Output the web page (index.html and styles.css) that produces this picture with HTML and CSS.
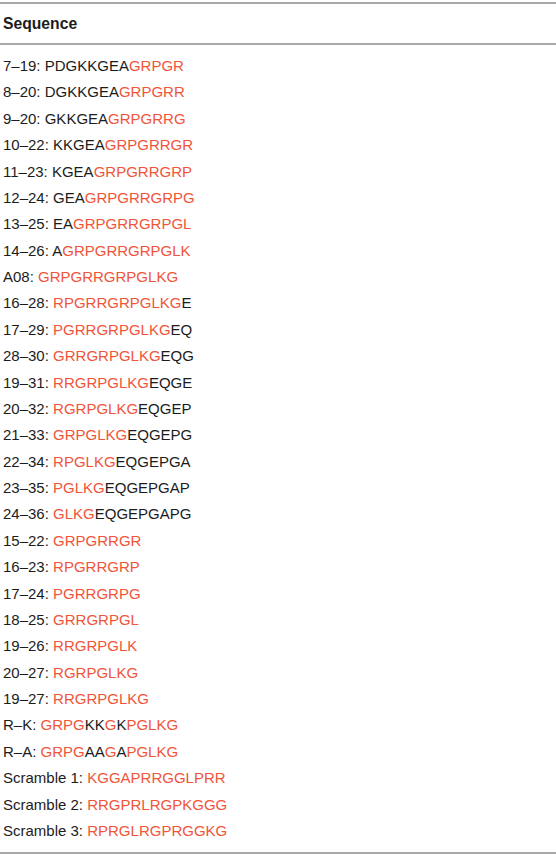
FILE: index.html
```html
<!DOCTYPE html>
<html>
<head>
<meta charset="utf-8">
<link rel="stylesheet" href="styles.css">
</head>
<body>
<table class="seq-table">
  <thead>
    <tr><th>Sequence</th></tr>
  </thead>
  <tbody>
    <tr><td>7–19: PDGKKGEA<span class="hl">GRPGR</span></td></tr>
    <tr><td>8–20: DGKKGEA<span class="hl">GRPGRR</span></td></tr>
    <tr><td>9–20: GKKGEA<span class="hl">GRPGRRG</span></td></tr>
    <tr><td>10–22: KKGEA<span class="hl">GRPGRRGR</span></td></tr>
    <tr><td>11–23: KGEA<span class="hl">GRPGRRGRP</span></td></tr>
    <tr><td>12–24: GEA<span class="hl">GRPGRRGRPG</span></td></tr>
    <tr><td>13–25: EA<span class="hl">GRPGRRGRPGL</span></td></tr>
    <tr><td>14–26: A<span class="hl">GRPGRRGRPGLK</span></td></tr>
    <tr><td>A08: <span class="hl">GRPGRRGRPGLKG</span></td></tr>
    <tr><td>16–28: <span class="hl">RPGRRGRPGLKG</span>E</td></tr>
    <tr><td>17–29: <span class="hl">PGRRGRPGLKG</span>EQ</td></tr>
    <tr><td>28–30: <span class="hl">GRRGRPGLKG</span>EQG</td></tr>
    <tr><td>19–31: <span class="hl">RRGRPGLKG</span>EQGE</td></tr>
    <tr><td>20–32: <span class="hl">RGRPGLKG</span>EQGEP</td></tr>
    <tr><td>21–33: <span class="hl">GRPGLKG</span>EQGEPG</td></tr>
    <tr><td>22–34: <span class="hl">RPGLKG</span>EQGEPGA</td></tr>
    <tr><td>23–35: <span class="hl">PGLKG</span>EQGEPGAP</td></tr>
    <tr><td>24–36: <span class="hl">GLKG</span>EQGEPGAPG</td></tr>
    <tr><td>15–22: <span class="hl">GRPGRRGR</span></td></tr>
    <tr><td>16–23: <span class="hl">RPGRRGRP</span></td></tr>
    <tr><td>17–24: <span class="hl">PGRRGRPG</span></td></tr>
    <tr><td>18–25: <span class="hl">GRRGRPGL</span></td></tr>
    <tr><td>19–26: <span class="hl">RRGRPGLK</span></td></tr>
    <tr><td>20–27: <span class="hl">RGRPGLKG</span></td></tr>
    <tr><td>19–27: <span class="hl">RRGRPGLKG</span></td></tr>
    <tr><td>R–K: <span class="hl">GRPG</span>KK<span class="hl">G</span>K<span class="hl">PGLKG</span></td></tr>
    <tr><td>R–A: <span class="hl">GRPG</span>AA<span class="hl">G</span>A<span class="hl">PGLKG</span></td></tr>
    <tr><td>Scramble 1: <span class="hl">KGGAPRRGGLPRR</span></td></tr>
    <tr><td>Scramble 2: <span class="hl">RRGPRLRGPKGGG</span></td></tr>
    <tr><td>Scramble 3: <span class="hl">RPRGLRGPRGGKG</span></td></tr>
  </tbody>
</table>
</body>
</html>
```
FILE: styles.css
```css
html, body {
  margin: 0;
  padding: 0;
  background: #ffffff;
}
body {
  font-family: "Liberation Sans", Arial, sans-serif;
  color: #1c1c1c;
}
.seq-table {
  width: 100%;
  border-collapse: collapse;
  margin-top: 2px;
  border-top: 2px solid #a8a8a8;
  border-bottom: 2px solid #a8a8a8;
}
.seq-table th {
  text-align: left;
  font-weight: bold;
  font-size: 15.7px;
  padding: 0 0 0 3px;
  height: 39px;
  border-bottom: 2px solid #a8a8a8;
}
.seq-table td {
  font-size: 15px;
  padding: 0 0 0 3px;
  line-height: 26.38px;
  white-space: nowrap;
}
.seq-table tbody tr:first-child td {
  padding-top: 8px;
}
.seq-table tbody tr:last-child td {
  padding-bottom: 8px;
}
.hl {
  color: #f0553a;
}
```
